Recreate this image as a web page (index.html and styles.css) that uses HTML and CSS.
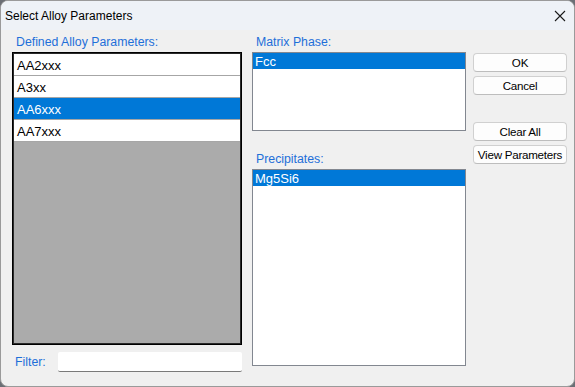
FILE: index.html
```html
<!DOCTYPE html>
<html lang="en">
<head>
    <meta charset="UTF-8">
    <meta name="viewport" content="width=device-width, initial-scale=1.0">
    <title>Select Alloy Parameters</title>
    <link rel="stylesheet" href="styles.css">
</head>
<body>
    <div class="window">
        <div class="titlebar">
            <span class="title">Select Alloy Parameters</span>
            <svg class="close" width="12" height="12" viewBox="0 0 12 12">
                <path d="M1 1 L11 11 M11 1 L1 11" stroke="#1a1a1a" stroke-width="1.1" fill="none"/>
            </svg>
        </div>

        <div class="content">
            <div class="col-left">
                <div class="label">Defined Alloy Parameters:</div>
                <div class="alloy-list">
                    <div class="alloy-item">AA2xxx</div>
                    <div class="alloy-item">A3xx</div>
                    <div class="alloy-item selected">AA6xxx</div>
                    <div class="alloy-item">AA7xxx</div>
                </div>
                <div class="filter-row">
                    <span class="label">Filter:</span>
                    <input type="text" class="filter-input">
                </div>
            </div>

            <div class="col-mid">
                <div class="label">Matrix Phase:</div>
                <div class="listbox matrix">
                    <div class="list-item selected">Fcc</div>
                </div>
                <div class="label precip-label">Precipitates:</div>
                <div class="listbox precip">
                    <div class="list-item selected">Mg5Si6</div>
                </div>
            </div>

            <div class="col-right">
                <button>OK</button>
                <button>Cancel</button>
                <button class="gap-top">Clear All</button>
                <button>View Parameters</button>
            </div>
        </div>
    </div>
</body>
</html>
```

FILE: styles.css
```css
* {
    box-sizing: border-box;
}
html, body {
    margin: 0;
    padding: 0;
    background-color: #6b6f75;
}
body {
    font-family: "Liberation Sans", Arial, sans-serif;
    font-size: 12px;
    color: #000;
}
.window {
    width: 575px;
    height: 387px;
    background-color: #f0f0f0;
    border: 1px solid #9a9a9a;
    border-radius: 8px;
    overflow: hidden;
}
.titlebar {
    height: 29px;
    background-color: #eef2f7;
    display: flex;
    align-items: center;
    justify-content: space-between;
    padding: 0 8px 0 4px;
}
.title {
    font-size: 12px;
    color: #000;
}
.close {
    display: block;
    margin-top: 1px;
}
.content {
    display: flex;
    padding: 5px 0 0 11px;
}
.label {
    color: #1e6fd9;
    font-size: 12.3px;
    height: 14px;
    line-height: 14px;
    margin-bottom: 3px;
    padding-left: 4px;
}
.col-left {
    width: 230px;
}
.alloy-list {
    height: 293px;
    background-color: #ababab;
    border: 1px solid #000;
    box-shadow: inset 0 0 0 1px #2a2a2a;
    padding: 1px;
}
.alloy-item {
    height: 22px;
    line-height: 23px;
    padding-left: 3px;
    font-size: 13px;
    background-color: #fff;
    border-bottom: 1px solid #a6a6a6;
}
.alloy-item.selected {
    background-color: #0078d7;
    color: #fff;
}
.filter-row {
    display: flex;
    align-items: center;
    margin-top: 7px;
}
.filter-row .label {
    margin: 0 0 0 3px;
    padding-left: 0;
    width: 43px;
}
.filter-input {
    width: 184px;
    height: 20px;
    border: none;
    border-bottom: 1px solid #7a7a7a;
    background-color: #fff;
    border-radius: 2px;
    outline: none;
}
.col-mid {
    width: 214px;
    margin-left: 10px;
}
.listbox {
    background-color: #fff;
    border: 1px solid #828790;
}
.matrix {
    height: 79px;
}
.precip {
    height: 197px;
}
.precip-label {
    margin-top: 21px;
}
.list-item {
    height: 16px;
    line-height: 17px;
    padding-left: 2px;
    font-size: 13px;
}
.list-item.selected {
    background-color: #0078d7;
    color: #fff;
}
.col-right {
    width: 94px;
    margin-left: 7px;
    padding-top: 18px;
    display: flex;
    flex-direction: column;
    gap: 4px;
}
button {
    height: 19px;
    padding: 0;
    font-family: "Liberation Sans", Arial, sans-serif;
    font-size: 11.6px;
    letter-spacing: -0.25px;
    color: #000;
    background-color: #fdfdfd;
    border: 1px solid #d0d0d0;
    border-bottom-color: #bdbdbd;
    border-radius: 4px;
}
button.gap-top {
    margin-top: 23px;
}
```
